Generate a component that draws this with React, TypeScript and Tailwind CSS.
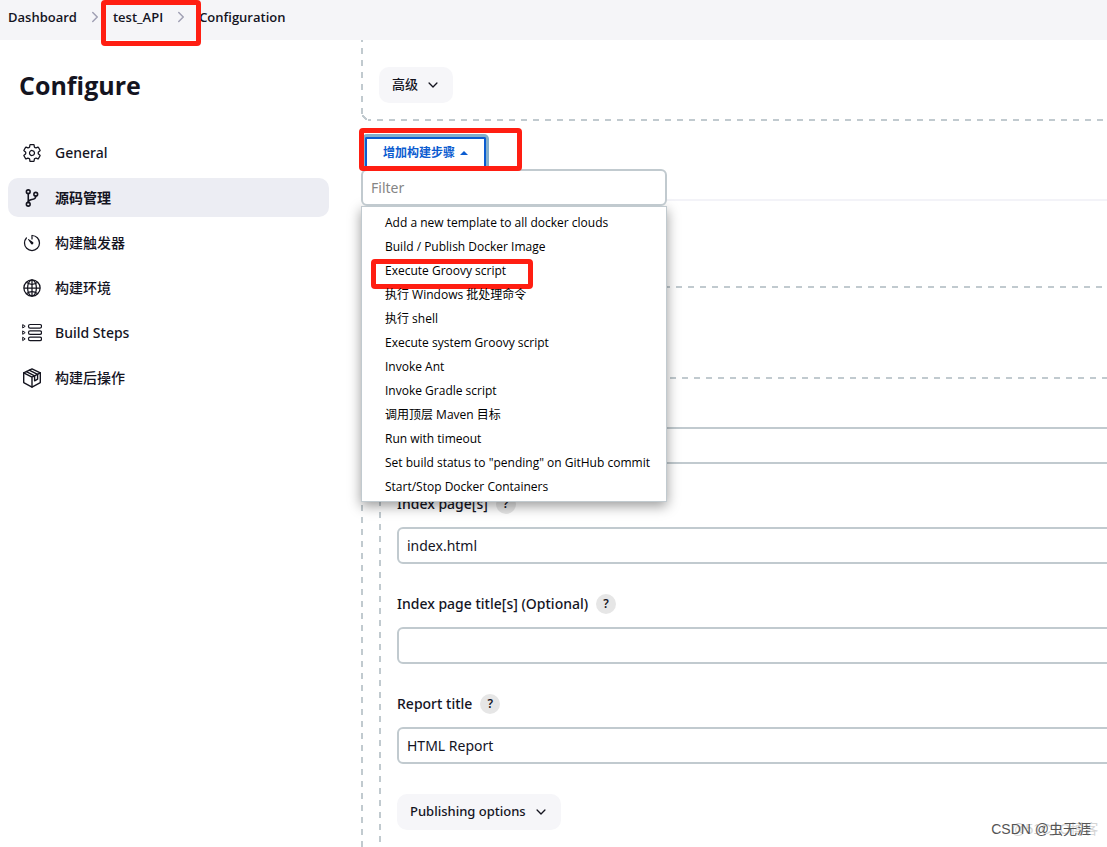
import { useState } from "react"
import type { ReactNode } from "react"
import {
	IoChevronDownOutline,
	IoChevronForwardOutline,
	IoGitBranchOutline,
	IoGlobeOutline,
	IoSettingsOutline,
	IoTimerOutline,
} from "react-icons/io5"

interface NavItem {
	label: string
	icon: ReactNode
}

function StepsIcon() {
	return (
		<svg
			className="w-5 h-5"
			fill="none"
			viewBox="0 0 20 20"
			stroke="currentColor"
			strokeLinejoin="round"
			aria-hidden="true"
		>
			{[1.5, 7.8, 14.1].map((y) => (
				<g key={y}>
					<path d={`M0.7 ${y + 0.1}L3.2 ${y + 1.8}L0.7 ${y + 3.5}Z`} />
					<rect x="6.5" y={y} width="13" height="3.6" rx="1.6" strokeWidth={1.2} />
				</g>
			))}
		</svg>
	)
}

function PackageIcon() {
	return (
		<svg
			className="w-5 h-5"
			fill="none"
			viewBox="0 0 20 20"
			stroke="currentColor"
			strokeWidth={1.4}
			strokeLinejoin="round"
			strokeLinecap="round"
			aria-hidden="true"
		>
			<path d="M10 0.9L18.3 4.8V14.6L10 19.1L1.7 14.6V4.8Z" />
			<path d="M1.7 4.8L10 9.2L18.3 4.8M10 9.2V19.1" />
			<path d="M4.4 3.6L12.6 7.8V12.8L15.6 11.2V6.3L7.2 2.2" />
		</svg>
	)
}

const navItems: NavItem[] = [
	{ label: "General", icon: <IoSettingsOutline className="w-5 h-5" /> },
	{ label: "源码管理", icon: <IoGitBranchOutline className="w-5 h-5 [&_*]:stroke-[40px]" /> },
	{ label: "构建触发器", icon: <IoTimerOutline className="w-5 h-5" /> },
	{ label: "构建环境", icon: <IoGlobeOutline className="w-5 h-5" /> },
	{ label: "Build Steps", icon: <StepsIcon /> },
	{ label: "构建后操作", icon: <PackageIcon /> },
]

const buildSteps = [
	"Add a new template to all docker clouds",
	"Build / Publish Docker Image",
	"Execute Groovy script",
	"执行 Windows 批处理命令",
	"执行 shell",
	"Execute system Groovy script",
	"Invoke Ant",
	"Invoke Gradle script",
	"调用顶层 Maven 目标",
	"Run with timeout",
	'Set build status to "pending" on GitHub commit',
	"Start/Stop Docker Containers",
]

// Dashes of 6px with gaps of 6px: left edge plus bottom edge, and left edge plus top edge
const dashedBottom =
	"bg-[repeating-linear-gradient(to_bottom,#c1cacf_8px_14px,transparent_14px_20px),repeating-linear-gradient(to_right,#c1cacf_9px_15px,transparent_15px_21px),linear-gradient(45deg,transparent_35%,#c1cacf_35%_65%,transparent_65%)] bg-[length:2px_calc(100%-5px),calc(100%-7px)_2px,5px_5px] bg-[position:0_0,7px_100%,1px_calc(100%-1px)] bg-no-repeat"
const dashedTop =
	"bg-[repeating-linear-gradient(to_bottom,#c1cacf_3px_9px,transparent_9px_15px),repeating-linear-gradient(to_right,#c1cacf_3px_9px,transparent_9px_15px)] bg-[length:2px_100%,100%_2px] bg-[position:0_0,0_0] bg-no-repeat"

function Breadcrumbs() {
	return (
		<nav
			aria-label="Breadcrumb"
			className="h-10 shrink-0 bg-[#f5f5f8] px-2 font-['Open_Sans','Noto_Sans_CJK_SC',sans-serif] text-[13px] leading-5 font-semibold"
		>
			<ol className="flex pt-[7px]">
				<li className="flex">
					<a href="#dashboard">Dashboard</a>
					<IoChevronForwardOutline className="mx-[10px] mt-[2px] w-4 h-4 text-[#a0a0b4]" />
				</li>
				<li className="relative flex">
					<a href="#test_API">test_API</a>
					<IoChevronForwardOutline className="mx-[10px] mt-[2px] w-4 h-4 text-[#a0a0b4]" />
					<span className="absolute -left-3 -right-[2px] -top-[7px] h-[46px] rounded border-5 border-[#ff1e12]" />
				</li>
				<li>
					<a href="#configuration">Configuration</a>
				</li>
			</ol>
		</nav>
	)
}

function Sidebar() {
	const [active, setActive] = useState("源码管理")

	return (
		<aside className="w-[329px] shrink-0 pl-2">
			<h1 className="pl-[11px] pt-[27px] font-['Open_Sans',sans-serif] text-[25px] leading-9 font-bold">
				Configure
			</h1>
			<nav aria-label="Configure" className="mt-[30px] flex flex-col gap-[6px]">
				{navItems.map((item) => (
					<button
						key={item.label}
						type="button"
						onClick={() => setActive(item.label)}
						className={`flex h-[39px] items-center gap-[13px] rounded-[10px] pl-[14px] text-left text-sm ${
							item.label === active ? "bg-[#ecedf3] font-semibold" : "font-medium"
						}`}
					>
						{item.icon}
						{item.label}
					</button>
				))}
			</nav>
		</aside>
	)
}

function ExpandButton({ label }: { label: string }) {
	return (
		<button
			type="button"
			className="flex h-9 w-fit items-center gap-2 rounded-[10px] bg-[#f6f6f9] px-[13px] text-[13px] font-medium"
		>
			{label}
			<IoChevronDownOutline className="w-[14px] h-[14px]" />
		</button>
	)
}

interface FieldProps {
	id: string
	label: string
	value: string
}

function Field({ id, label, value }: FieldProps) {
	return (
		<div>
			<div className="flex h-5 items-center gap-2">
				<label htmlFor={id} className="text-sm font-medium">
					{label}
				</label>
				<button
					type="button"
					aria-label={`Help for ${label}`}
					className="h-5 w-5 rounded-full bg-[#e6e6e6] text-xs font-semibold"
				>
					?
				</button>
			</div>
			<input
				id={id}
				type="text"
				defaultValue={value}
				className="mt-[13px] block h-[37px] w-full rounded-md border-2 border-[#c1cacf] bg-white px-2 text-sm"
			/>
		</div>
	)
}

function AddStepMenu() {
	return (
		<div className="relative mt-4 h-[30px] w-[306px]">
			<button
				type="button"
				className="ml-1 flex h-[30px] w-[121px] items-center justify-center gap-[5px] rounded-t-xs border-2 border-b-0 border-[#0b5cd0] bg-white text-xs font-bold text-[#0b5cd0] ring-3 ring-[#84afcb]"
			>
				增加构建步骤
				<svg className="w-2 h-1" viewBox="0 0 8 4" fill="currentColor" aria-hidden="true">
					<path d="M0 4L4 0L8 4Z" />
				</svg>
			</button>
			<div className="absolute top-8 left-0 z-10 w-full">
				<input
					type="text"
					aria-label="Filter"
					placeholder="Filter"
					className="relative z-10 block h-[37px] w-full rounded-md border-2 border-[#c1cacf] bg-white px-2 text-sm placeholder:text-[#858585]"
				/>
				<ul className="border border-[#c1cacf] bg-white pt-1 pb-[2px] font-['Open_Sans','Noto_Sans_CJK_SC',sans-serif] shadow-[0_4px_12px_rgba(0,0,0,0.4)]">
					{buildSteps.map((step) => (
						<li key={step} className="relative">
							<button
								type="button"
								className="block h-6 w-full pl-[23px] text-left text-xs whitespace-nowrap text-black"
							>
								{step}
							</button>
							{step === "Execute Groovy script" && (
								<span className="absolute top-0 left-[9px] h-[30px] w-[162px] rounded border-5 border-[#ff1e12]" />
							)}
						</li>
					))}
				</ul>
			</div>
			<span className="absolute -top-[9px] -left-[2px] z-20 h-[43px] w-[163px] rounded border-5 border-[#ff1e12]" />
		</div>
	)
}

export default function App() {
	return (
		<div className="relative flex h-screen flex-col overflow-hidden bg-white font-['Noto_Sans','Noto_Sans_CJK_SC',sans-serif] text-[#14141f]">
			<Breadcrumbs />
			<div className="flex min-h-0 flex-1">
				<Sidebar />
				{/* The form is wider than the window and runs off its right edge */}
				<main className="-mr-8 ml-8 min-w-0 flex-1">
					<section className={`pt-[27px] pb-[18px] pl-[18px] ${dashedBottom}`}>
						<ExpandButton label="高级" />
					</section>
					<AddStepMenu />
					<hr className="mt-8 border-t-2 border-[#f3f3f8]" />
					<section className={`mt-[85px] pt-[91px] pl-[18px] ${dashedTop}`}>
						<div className={`flex flex-col gap-[30px] pt-[50px] pb-8 pl-[18px] ${dashedTop}`}>
							<input
								type="text"
								aria-label="HTML directory"
								className="block h-[37px] w-full rounded-md border-2 border-[#c1cacf] bg-white px-2 text-sm"
							/>
							<Field id="index-pages" label="Index page[s]" value="index.html" />
							<Field id="index-titles" label="Index page title[s] (Optional)" value="" />
							<Field id="report-title" label="Report title" value="HTML Report" />
							<ExpandButton label="Publishing options" />
						</div>
					</section>
				</main>
			</div>
			<div className="absolute right-4 bottom-2 font-['Liberation_Sans','Noto_Sans_CJK_SC',sans-serif] text-sm leading-5 text-[#555]">
				<span className="absolute left-5 whitespace-nowrap text-[#d4d4d4]">@51CTO博客</span>
				<span className="relative">CSDN @虫无涯</span>
			</div>
		</div>
	)
}
